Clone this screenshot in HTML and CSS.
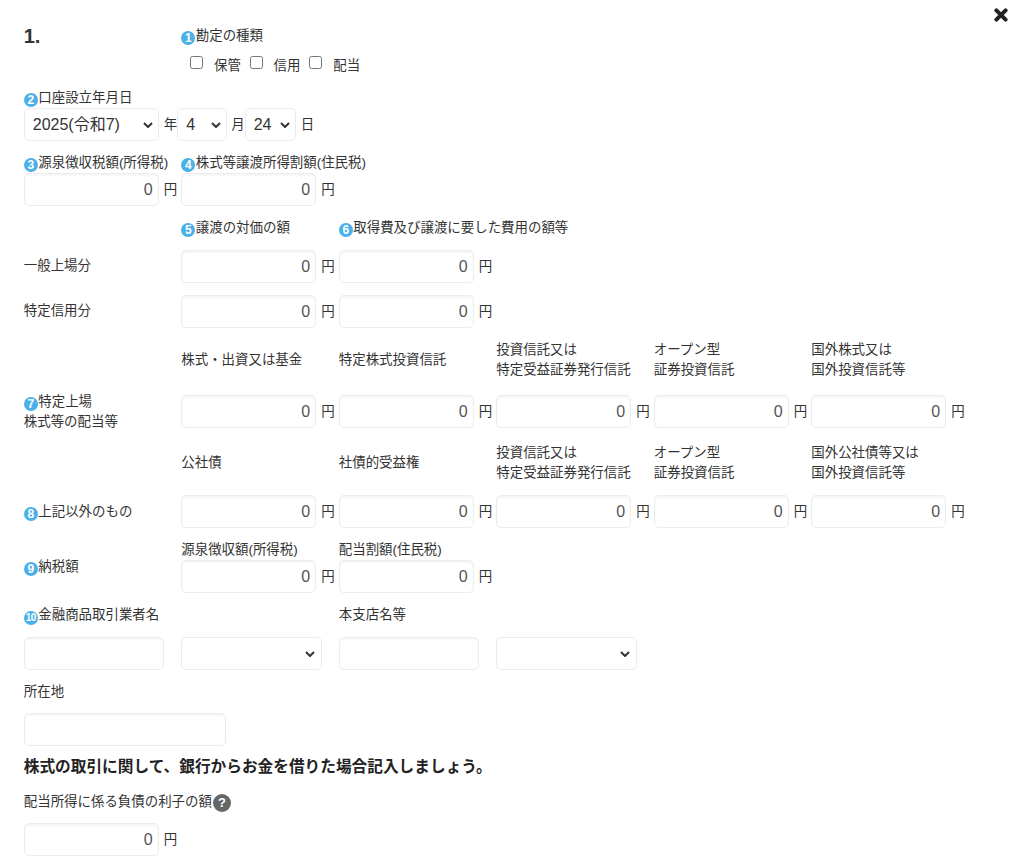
FILE: index.html
```html
<!DOCTYPE html>
<html lang="ja">
<head>
  <meta charset="UTF-8">
  <meta name="viewport" content="width=device-width, initial-scale=1.0">
  <title>特定口座年間取引報告書</title>
  <link rel="stylesheet" href="styles.css">
</head>
<body>
  <div class="sheet">
    <button class="close" aria-label="閉じる">
      <svg width="14" height="14" viewBox="0 0 14 14"><path d="M2.4 2.4 L11.6 11.6 M11.6 2.4 L2.4 11.6" /></svg>
    </button>

    <div class="row row-account">
      <div class="number">1.</div>
      <div class="wide">
        <div class="label"><span class="badge">1</span>勘定の種類</div>
        <div class="checks">
          <label class="check"><input type="checkbox"> 保管</label>
          <label class="check"><input type="checkbox"> 信用</label>
          <label class="check"><input type="checkbox"> 配当</label>
        </div>
      </div>
    </div>

    <div class="block block-date">
      <div class="label label-tight"><span class="badge">2</span>口座設立年月日</div>
      <div class="date">
        <select class="year"><option>2025(令和7)</option></select>
        <span class="unit">年</span>
        <select class="month"><option>4</option></select>
        <span class="unit">月</span>
        <select class="day"><option>24</option></select>
        <span class="unit">日</span>
      </div>
    </div>

    <div class="row row-tax">
      <div>
        <div class="label label-tight"><span class="badge">3</span>源泉徴収税額(所得税)</div>
        <div class="field"><input class="money" value="0"><span class="unit">円</span></div>
      </div>
      <div>
        <div class="label label-tight"><span class="badge">4</span>株式等譲渡所得割額(住民税)</div>
        <div class="field"><input class="money" value="0"><span class="unit">円</span></div>
      </div>
    </div>

    <div class="row row-head-transfer">
      <div></div>
      <div class="label"><span class="badge">5</span>譲渡の対価の額</div>
      <div class="label wide"><span class="badge">6</span>取得費及び譲渡に要した費用の額等</div>
    </div>
    <div class="row row-money">
      <div class="row-name row-name-up">一般上場分</div>
      <div class="field"><input class="money" value="0"><span class="unit">円</span></div>
      <div class="field"><input class="money" value="0"><span class="unit">円</span></div>
    </div>
    <div class="row row-money">
      <div class="row-name row-name-up">特定信用分</div>
      <div class="field"><input class="money" value="0"><span class="unit">円</span></div>
      <div class="field"><input class="money" value="0"><span class="unit">円</span></div>
    </div>

    <div class="row row-head row-head-stock">
      <div></div>
      <div class="label">株式・出資又は基金</div>
      <div class="label">特定株式投資信託</div>
      <div class="label">投資信託又は<br>特定受益証券発行信託</div>
      <div class="label">オープン型<br>証券投資信託</div>
      <div class="label">国外株式又は<br>国外投資信託等</div>
    </div>
    <div class="row row-money">
      <div class="row-name"><span class="badge">7</span>特定上場<br>株式等の配当等</div>
      <div class="field"><input class="money" value="0"><span class="unit">円</span></div>
      <div class="field"><input class="money" value="0"><span class="unit">円</span></div>
      <div class="field"><input class="money" value="0"><span class="unit">円</span></div>
      <div class="field"><input class="money" value="0"><span class="unit">円</span></div>
      <div class="field"><input class="money" value="0"><span class="unit">円</span></div>
    </div>

    <div class="row row-head">
      <div></div>
      <div class="label">公社債</div>
      <div class="label">社債的受益権</div>
      <div class="label">投資信託又は<br>特定受益証券発行信託</div>
      <div class="label">オープン型<br>証券投資信託</div>
      <div class="label">国外公社債等又は<br>国外投資信託等</div>
    </div>
    <div class="row row-money">
      <div class="row-name"><span class="badge">8</span>上記以外のもの</div>
      <div class="field"><input class="money" value="0"><span class="unit">円</span></div>
      <div class="field"><input class="money" value="0"><span class="unit">円</span></div>
      <div class="field"><input class="money" value="0"><span class="unit">円</span></div>
      <div class="field"><input class="money" value="0"><span class="unit">円</span></div>
      <div class="field"><input class="money" value="0"><span class="unit">円</span></div>
    </div>

    <div class="row row-pay">
      <div class="label"><span class="badge">9</span>納税額</div>
      <div>
        <div class="label label-tight">源泉徴収額(所得税)</div>
        <div class="field"><input class="money" value="0"><span class="unit">円</span></div>
      </div>
      <div>
        <div class="label label-tight">配当割額(住民税)</div>
        <div class="field"><input class="money" value="0"><span class="unit">円</span></div>
      </div>
    </div>

    <div class="row row-broker">
      <div class="label"><span class="badge badge-small">10</span>金融商品取引業者名</div>
      <div></div>
      <div class="label">本支店名等</div>
    </div>
    <div class="row row-broker-fields">
      <input class="text">
      <select class="pick"></select>
      <input class="text">
      <select class="pick"></select>
    </div>

    <div class="block block-address">
      <div class="label">所在地</div>
      <input class="text address">
    </div>

    <h3 class="notice">株式の取引に関して、銀行からお金を借りた場合記入しましょう。</h3>

    <div class="block block-interest">
      <div class="label">配当所得に係る負債の利子の額<span class="help">?</span></div>
      <div class="field"><input class="money" value="0"><span class="unit">円</span></div>
    </div>
  </div>
</body>
</html>
```

FILE: styles.css
```css
* {
  box-sizing: border-box;
}
body {
  margin: 0;
  background: #ffffff;
  color: #333333;
  font-family: "Liberation Sans", "Noto Sans CJK JP", sans-serif;
  font-size: 13.44px;
  line-height: 20px;
}
.sheet {
  position: relative;
  width: 1035px;
  height: 866px;
  padding: 24px 0 0 23.75px;
  overflow: hidden;
}
.close {
  position: absolute;
  top: 8px;
  right: 27px;
  width: 14px;
  height: 14px;
  padding: 0;
  border: none;
  background: none;
}
.close svg {
  display: block;
}
.close path {
  fill: none;
  stroke: #222222;
  stroke-width: 4;
  stroke-linecap: round;
}
.row {
  display: grid;
  grid-template-columns: repeat(6, 157.5px);
}
.wide {
  white-space: nowrap;
}
.number {
  font-size: 20px;
  font-weight: bold;
  line-height: 24px;
}
.label {
  padding-top: 1px;
  margin-bottom: -1px;
  white-space: nowrap;
}
.label-tight {
  margin-bottom: 0;
}
.row-name {
  white-space: nowrap;
}
.row-name-up {
  padding-bottom: 2px;
}
.badge {
  display: inline-block;
  width: 14px;
  height: 14px;
  margin-right: 0.5px;
  border-radius: 50%;
  background: #4ab0e8;
  color: #ffffff;
  font-size: 12px;
  font-weight: bold;
  line-height: 14px;
  text-align: center;
  vertical-align: -2px;
}
.badge-small {
  font-size: 10px;
  letter-spacing: -0.5px;
}
.row-account {
  height: 63px;
  padding-top: 1px;
}
.row-account .number {
  margin-top: -1px;
}
.checks {
  display: flex;
  gap: 9px;
  margin-top: 11px;
  padding-left: 9px;
}
.check input {
  margin: 0 7px 0 0;
  vertical-align: 1px;
}
.date {
  display: flex;
  align-items: center;
}
.date .unit {
  margin-left: 5px;
}
.date .month + .unit {
  margin-left: 4px;
}
select,
input.money,
input.text {
  height: 33px;
  border: 1px solid #ececec;
  border-radius: 5px;
  background: #ffffff;
  color: #333333;
  font-family: inherit;
}
input.money,
input.text {
  box-shadow: inset 0 2px 2px rgba(0, 0, 0, 0.04);
}
select {
  padding: 0 4px 0 8px;
  font-size: 16px;
  appearance: none;
  background-image: url("data:image/svg+xml,%3Csvg xmlns='http://www.w3.org/2000/svg' width='10' height='6' viewBox='0 0 10 6'%3E%3Cpath d='M1 1 L5 5 L9 1' fill='none' stroke='%23333' stroke-width='2'/%3E%3C/svg%3E");
  background-repeat: no-repeat;
  background-position: right 5px center;
}
.year {
  width: 135px;
}
.month {
  width: 50px;
}
.day {
  width: 51px;
}
.block-date {
  height: 65px;
}
.row-tax {
  height: 65px;
}
.field {
  display: flex;
  align-items: center;
}
input.money {
  width: 135px;
  padding: 0 5px;
  color: #555555;
  font-size: 16px;
  text-align: right;
}
.field .unit {
  margin-left: 5px;
}
.row-head-transfer {
  height: 27px;
}
.row-money {
  height: 45px;
  align-items: center;
}
.row-head {
  height: 55px;
  align-items: center;
}
.row-head-stock {
  padding-bottom: 5px;
}
.row-pay {
  padding: 5px 0 11px;
  align-items: center;
}
.row-broker {
  height: 33px;
}
.row-broker-fields {
  align-items: start;
}
input.text {
  width: 140px;
}
.pick {
  width: 141px;
  background-position: right 6px center;
}
.block-address {
  margin-top: 11px;
}
.block-address .label {
  margin-bottom: 11px;
}
input.address {
  display: block;
  width: 202px;
}
.notice {
  margin: 11px 0 0;
  color: #222222;
  font-size: 15.68px;
  line-height: 20px;
}
.block-interest {
  margin-top: 14px;
}
.block-interest .label {
  margin-bottom: 11px;
}
.help {
  display: inline-block;
  width: 18px;
  height: 18px;
  margin-left: 1px;
  border-radius: 50%;
  background: #666666;
  color: #ffffff;
  font-size: 13px;
  font-weight: bold;
  line-height: 18px;
  text-align: center;
  vertical-align: -1px;
}
```
